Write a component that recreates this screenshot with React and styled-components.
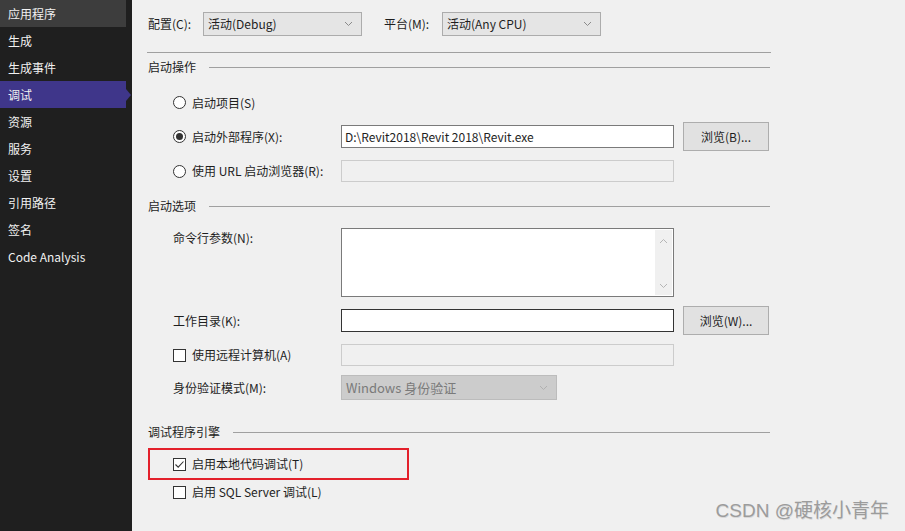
import React from 'react';
import styled, { createGlobalStyle, css } from 'styled-components';

const GlobalStyle = createGlobalStyle`
  html, body { margin: 0; padding: 0; background: #f0f0f0; }
  body {
    font-family: "Noto Sans CJK SC", "Noto Sans", sans-serif;
    font-size: 12px;
    color: #1e1e1e;
  }
  #root { width: 905px; height: 531px; }
`;

const Page = styled.div`
  position: relative;
  display: flex;
  width: 905px;
  height: 531px;
  overflow: hidden;
  background: #f0f0f0;
`;

const Sidebar = styled.nav`
  flex: none;
  width: 132px;
  background: #1f1f1f;
  display: flex;
  flex-direction: column;
`;

const NavItem = styled.div`
  position: relative;
  width: 126px;
  height: 27px;
  box-sizing: border-box;
  padding-left: 8px;
  display: flex;
  align-items: center;
  color: #f1f1f1;
  font-size: 12px;
  line-height: 16px;
  background: ${(p) => (p.$selected ? '#3f368a' : p.$hover ? '#3d3d3d' : 'transparent')};
  ${(p) =>
    p.$selected &&
    css`
      &::after {
        content: '';
        position: absolute;
        left: 126px;
        top: 50%;
        transform: translateY(-50%);
        border-left: 5px solid #3f368a;
        border-top: 6px solid transparent;
        border-bottom: 6px solid transparent;
      }
    `}
`;

const Main = styled.main`
  flex: 1;
  display: flex;
  flex-direction: column;
  padding: 12px 0 0 16px;
  line-height: 16px;
`;

const TopBar = styled.div`
  display: flex;
  align-items: center;
  height: 24px;
`;

const TopLabel = styled.span`
  flex: none;
  width: ${(p) => p.$w}px;
  margin-left: ${(p) => p.$ml || 0}px;
`;

const SelectBox = styled.div`
  flex: none;
  box-sizing: border-box;
  width: ${(p) => p.$w}px;
  height: ${(p) => p.$h || 24}px;
  display: flex;
  align-items: center;
  justify-content: space-between;
  padding: 0 8px 0 4px;
  border: 1px solid ${(p) => (p.$disabled ? '#bcbcbc' : '#acacac')};
  background: ${(p) => (p.$disabled ? '#cccccc' : '#e5e5e5')};
  color: ${(p) => (p.$disabled ? '#7a7a7a' : '#1e1e1e')};
  font-size: ${(p) => (p.$disabled ? 13 : 12)}px;
`;

const Divider = styled.div`
  margin: 16px 0 0 -1px;
  width: 624px;
  height: 1px;
  background: #a0a0a0;
`;

const Header = styled.div`
  display: flex;
  align-items: center;
  height: 16px;
  width: 622px;
  margin-top: ${(p) => p.$mt}px;
  &::after {
    content: '';
    flex: 1;
    height: 1px;
    margin-left: 13px;
    background: #a0a0a0;
  }
`;

const Row = styled.div`
  display: grid;
  grid-template-columns: 159px 333px 86px;
  column-gap: 9px;
  align-items: ${(p) => (p.$top ? 'start' : 'center')};
  padding-left: 25px;
  height: ${(p) => p.$h}px;
  margin-top: ${(p) => p.$mt}px;
`;

const Label = styled.label`
  display: flex;
  align-items: center;
  gap: 6px;
  white-space: nowrap;
  padding-top: ${(p) => (p.$pt ? p.$pt : 0)}px;
`;

const Radio = styled.span`
  flex: none;
  box-sizing: border-box;
  width: 13px;
  height: 13px;
  border-radius: 50%;
  border: 1px solid #333;
  background: #fff;
  display: flex;
  align-items: center;
  justify-content: center;
  &::after {
    content: '';
    display: ${(p) => (p.$checked ? 'block' : 'none')};
    width: 7px;
    height: 7px;
    border-radius: 50%;
    background: #333;
  }
`;

const Check = styled.span`
  flex: none;
  box-sizing: border-box;
  width: 13px;
  height: 13px;
  border: 1px solid #333;
  background: #fff;
  display: flex;
  align-items: center;
  justify-content: center;
`;

const TextInput = styled.div`
  box-sizing: border-box;
  height: ${(p) => p.$h || 23}px;
  display: flex;
  align-items: center;
  padding-left: 3px;
  border: 1px solid ${(p) => (p.$disabled ? '#cccccc' : p.$focus ? '#333333' : '#7a7a7a')};
  background: ${(p) => (p.$disabled ? '#f0f0f0' : '#ffffff')};
  white-space: nowrap;
`;

const TextArea = styled.div`
  box-sizing: border-box;
  height: 69px;
  border: 1px solid #7a7a7a;
  background: #fff;
  display: flex;
  justify-content: flex-end;
  padding: 1px;
`;

const ScrollBar = styled.div`
  width: 17px;
  background: #f0f0f0;
  display: flex;
  flex-direction: column;
  justify-content: space-between;
  align-items: center;
  padding: 8px 0 6px;
`;

const Button = styled.button`
  box-sizing: border-box;
  height: 29px;
  width: 86px;
  border: 1px solid #adadad;
  background: #e1e1e1;
  font-family: inherit;
  font-size: 12px;
  color: #1e1e1e;
  padding: 0;
`;

const Highlight = styled.div`
  box-sizing: border-box;
  width: 261px;
  height: 32px;
  margin-top: 8px;
  border: 2px solid #e3202b;
  display: flex;
  align-items: center;
  padding-left: 23px;
`;

const CheckRow = styled.div`
  display: flex;
  align-items: center;
  height: 16px;
  padding-left: 25px;
  margin-top: 4px;
`;

const Watermark = styled.div`
  position: absolute;
  right: 16px;
  top: 500px;
  font-family: "Liberation Sans", "Noto Sans CJK SC", sans-serif;
  font-size: 19px;
  line-height: 22px;
  color: #9c9c9c;
  text-shadow: 0.5px 0.5px 0 #d8d8d8;
`;

const Chevron = ({ up, color = '#8a8a8a', w = 9 }) => (
  <svg width={w} height="6" viewBox="0 0 9 6" fill="none">
    <path d={up ? 'M1 5 L4.5 1.5 L8 5' : 'M1 1 L4.5 4.5 L8 1'} stroke={color} strokeWidth="1" />
  </svg>
);

const CheckMark = () => (
  <svg width="11" height="11" viewBox="0 0 11 11" fill="none">
    <path d="M1.5 5.5 L4.2 8.2 L9.5 2.5" stroke="#333" strokeWidth="1.1" />
  </svg>
);

const navItems = ['应用程序', '生成', '生成事件', '调试', '资源', '服务', '设置', '引用路径', '签名', 'Code Analysis'];

export default function App() {
  return (
    <Page>
      <GlobalStyle />
      <Sidebar>
        {navItems.map((t, i) => (
          <NavItem key={t} $hover={i === 0} $selected={i === 3}>
            {t}
          </NavItem>
        ))}
      </Sidebar>
      <Main>
        <TopBar>
          <TopLabel $w={55}>配置(C):</TopLabel>
          <SelectBox $w={159}>
            <span>活动(Debug)</span>
            <Chevron />
          </SelectBox>
          <TopLabel $w={58} $ml={22}>平台(M):</TopLabel>
          <SelectBox $w={159}>
            <span>活动(Any CPU)</span>
            <Chevron />
          </SelectBox>
        </TopBar>
        <Divider />

        <Header $mt={6}>启动操作</Header>
        <Row $h={23} $mt={16}>
          <Label>
            <Radio />
            启动项目(S)
          </Label>
        </Row>
        <Row $h={29} $mt={8}>
          <Label>
            <Radio $checked />
            启动外部程序(X):
          </Label>
          <TextInput>D:\Revit2018\Revit 2018\Revit.exe</TextInput>
          <Button>浏览(B)...</Button>
        </Row>
        <Row $h={22} $mt={9}>
          <Label>
            <Radio />
            使用 URL 启动浏览器(R):
          </Label>
          <TextInput $h={22} $disabled />
        </Row>

        <Header $mt={16}>启动选项</Header>
        <Row $h={69} $mt={14} $top>
          <Label $pt={2}>命令行参数(N):</Label>
          <TextArea>
            <ScrollBar>
              <Chevron up color="#b5b5b5" />
              <Chevron color="#b5b5b5" />
            </ScrollBar>
          </TextArea>
        </Row>
        <Row $h={29} $mt={9}>
          <Label>工作目录(K):</Label>
          <TextInput $focus />
          <Button>浏览(W)...</Button>
        </Row>
        <Row $h={22} $mt={9}>
          <Label>
            <Check />
            使用远程计算机(A)
          </Label>
          <TextInput $h={22} $disabled />
        </Row>
        <Row $h={25} $mt={9}>
          <Label>身份验证模式(M):</Label>
          <SelectBox $w={216} $h={25} $disabled>
            <span>Windows 身份验证</span>
            <Chevron color="#b0b0b0" />
          </SelectBox>
        </Row>

        <Header $mt={24}>调试程序引擎</Header>
        <Highlight>
          <Label>
            <Check>
              <CheckMark />
            </Check>
            启用本地代码调试(T)
          </Label>
        </Highlight>
        <CheckRow>
          <Label>
            <Check />
            启用 SQL Server 调试(L)
          </Label>
        </CheckRow>
      </Main>
      <Watermark>CSDN @硬核小青年</Watermark>
    </Page>
  );
}
